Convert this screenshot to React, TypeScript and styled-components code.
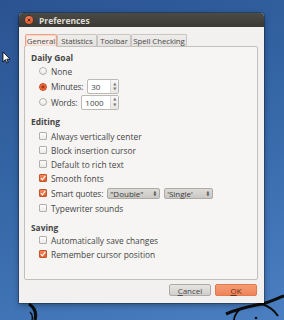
import React from 'react';
import styled, { createGlobalStyle } from 'styled-components';

const GlobalStyle = createGlobalStyle`
    html, body {
        margin: 0;
        padding: 0;
    }
    body {
        font-family: 'Open Sans', 'DejaVu Sans', sans-serif;
    }
`;

const Desktop = styled.div`
    position: relative;
    width: 284px;
    height: 320px;
    overflow: hidden;
    box-sizing: border-box;
    padding: 13px 0 0 19px;
    background: linear-gradient(160deg, #2b5391 0%, #3566a6 45%, #4a7fc2 100%);
`;

const Backdrop = styled.svg`
    position: absolute;
    left: 0;
    top: 0;
`;

const Window = styled.div`
    position: relative;
    width: 245px;
    height: 290px;
    display: flex;
    flex-direction: column;
    border-radius: 4px 4px 0 0;
    background: #f2f1f0;
    box-shadow: 0 0 0 1px rgba(0, 0, 0, 0.25), 0 2px 6px rgba(0, 0, 0, 0.35);
    overflow: hidden;
`;

const TitleBar = styled.div`
    height: 14px;
    flex: none;
    display: flex;
    align-items: center;
    gap: 6px;
    padding-left: 6px;
    background: linear-gradient(#4b4a45, #3a3935);
    color: #dfdbd2;
    font-weight: 700;
    font-size: 8.5px;
`;

const CloseButton = styled.div`
    width: 8px;
    height: 8px;
    border-radius: 50%;
    background: radial-gradient(circle at 40% 35%, #f7845c, #d9491b);
    box-shadow: 0 0 0 0.5px #2c2b28;
    display: flex;
    align-items: center;
    justify-content: center;
`;

const Body = styled.div`
    flex: 1;
    display: flex;
    flex-direction: column;
    padding: 7px 6px 0 5px;
`;

const Tabs = styled.div`
    display: flex;
    padding-left: 1px;
    height: 13px;
    position: relative;
    z-index: 1;
    margin-bottom: -1px;
`;

const Tab = styled.div<{ $active?: boolean; $w: number }>`
    width: ${p => p.$w}px;
    flex: none;
    box-sizing: border-box;
    display: flex;
    align-items: center;
    justify-content: center;
    white-space: nowrap;
    font-size: 7.9px;
    letter-spacing: -0.1px;
    color: #4c4c4c;
    border: 1px solid ${p => (p.$active ? '#e9a487' : '#c9c6c1')};
    border-bottom-color: ${p => (p.$active ? '#f6f5f4' : '#c3c0bb')};
    background: ${p => (p.$active ? '#f9ece6' : 'linear-gradient(#efedeb, #e4e2df)')};
    border-radius: 2px 2px 0 0;
    box-shadow: ${p => (p.$active ? 'inset 0 0 0 1px #fbd8c9' : 'none')};
`;

const Panel = styled.div`
    width: 234px;
    height: 234px;
    box-sizing: border-box;
    border: 1px solid #c3c0bb;
    border-radius: 0 2px 2px 2px;
    background: #f6f5f4;
    padding: 4px 0 0 6px;
    display: flex;
    flex-direction: column;
    color: #454545;
    font-size: 8.4px;
`;

const Header = styled.div<{ $mt?: number; $mb?: number }>`
    height: 12px;
    flex: none;
    display: flex;
    align-items: center;
    font-weight: 700;
    margin-top: ${p => p.$mt ?? 0}px;
    margin-bottom: ${p => p.$mb ?? 0}px;
`;

const Row = styled.div<{ $h?: number }>`
    height: ${p => p.$h ?? 14}px;
    flex: none;
    display: flex;
    align-items: center;
    padding-left: 8px;
    gap: 4px;
`;

const Label = styled.span<{ $mr?: number; $tight?: boolean }>`
    margin-right: ${p => p.$mr ?? 0}px;
    letter-spacing: ${p => (p.$tight ? '-0.2px' : 'normal')};
    white-space: nowrap;
`;

const RadioCircle = styled.div<{ $on?: boolean }>`
    width: 8px;
    height: 8px;
    box-sizing: border-box;
    border-radius: 50%;
    border: 1px solid ${p => (p.$on ? '#c84a1f' : '#b3b0ab')};
    background: ${p => (p.$on ? 'radial-gradient(circle, #a53613 0 1.3px, #ee6d3d 1.8px)' : 'linear-gradient(#fdfdfd, #ebeae8)')};
`;

const CheckBox = styled.div<{ $on?: boolean }>`
    width: 8px;
    height: 8px;
    box-sizing: border-box;
    border-radius: 1px;
    border: 1px solid ${p => (p.$on ? '#c4552a' : '#b3b0ab')};
    background: ${p => (p.$on ? 'linear-gradient(#f58a5f, #df5f2f)' : 'linear-gradient(#fdfdfd, #ebeae8)')};
    display: flex;
    align-items: center;
    justify-content: center;
`;

const Spin = styled.div<{ $w: number }>`
    width: ${p => p.$w}px;
    height: 15px;
    box-sizing: border-box;
    border: 1px solid #bdbab5;
    border-radius: 2px;
    background: #ffffff;
    display: flex;
    align-items: stretch;
    font-size: 8px;
`;

const SpinText = styled.div`
    flex: 1;
    display: flex;
    align-items: center;
    padding-left: 3px;
`;

const SpinArrows = styled.div`
    width: 7px;
    border-left: 1px solid #dcdad6;
    background: linear-gradient(#f8f8f7, #e8e7e5);
    display: flex;
    flex-direction: column;
    align-items: center;
    justify-content: space-evenly;
    color: #7a7875;
    font-size: 4px;
    line-height: 4px;
`;

const Combo = styled.div<{ $w: number }>`
    width: ${p => p.$w}px;
    height: 11px;
    box-sizing: border-box;
    border: 1px solid #aeaba6;
    border-radius: 2px;
    background: linear-gradient(#dddbd8, #cac8c4);
    display: flex;
    align-items: center;
    justify-content: space-between;
    padding: 0 3px 0 2px;
    font-size: 8px;
    color: #3c3c3c;
`;

const ComboArrows = styled.div`
    display: flex;
    flex-direction: column;
    font-size: 3.5px;
    line-height: 3.5px;
    color: #555;
`;

const Footer = styled.div`
    display: flex;
    justify-content: flex-end;
    gap: 4px;
    padding: 4px 1px 0 0;
`;

const Button = styled.div<{ $primary?: boolean }>`
    width: 42px;
    height: 12px;
    box-sizing: border-box;
    border-radius: 2px;
    display: flex;
    align-items: center;
    justify-content: center;
    font-size: 8px;
    color: ${p => (p.$primary ? '#6b2d16' : '#4a4a4a')};
    border: 1px solid ${p => (p.$primary ? '#e07a4e' : '#aeaba6')};
    background: ${p => (p.$primary ? 'linear-gradient(#f49c76, #ee8558)' : 'linear-gradient(#e6e4e1, #d1cfcb)')};
`;

const Mnemonic = styled.span`
    text-decoration: underline;
    text-decoration-thickness: 0.5px;
`;

const Check = () => (
    <svg width="6" height="6" viewBox="0 0 6 6">
        <path d="M0.8 3.2 L2.4 4.8 L5.3 1" stroke="#fff" strokeWidth="1.2" fill="none" />
    </svg>
);

const Arrows = () => (
    <>
        <span>▲</span>
        <span>▼</span>
    </>
);

const Option = ({ label, on }: { label: string; on?: boolean }) => (
    <Row>
        <CheckBox $on={on}>{on && <Check />}</CheckBox>
        <Label>{label}</Label>
    </Row>
);

const App = () => {
    return (
        <>
            <GlobalStyle />
            <Desktop>
                <Backdrop width="284" height="320" viewBox="0 0 284 320">
                    <path d="M3 52 L3 62 L5.3 59.6 L6.8 63 L8.2 62.4 L6.8 59.2 L10 59.2 Z" fill="#fff" stroke="#000" strokeWidth="0.8" />
                    <path d="M29 304 C34 307 37 312 35 320" stroke="#0d0d0d" strokeWidth="3.2" fill="none" />
                    <path d="M30 312 C32 314 33 317 32 320" stroke="#0d0d0d" strokeWidth="1.5" fill="none" />
                    <path d="M226 314 C240 308 252 306 262 304 C270 302 278 298 284 296" stroke="#0d0d0d" strokeWidth="3" fill="none" />
                    <path d="M262 304 C268 306 274 310 278 316" stroke="#0d0d0d" strokeWidth="2" fill="none" />
                    <path d="M240 309 C236 313 234 317 234 320" stroke="#0d0d0d" strokeWidth="1.8" fill="none" />
                    <circle cx="256" cy="318" r="1.3" fill="#0d0d0d" />
                </Backdrop>
                <Window>
                    <TitleBar>
                        <CloseButton>
                            <svg width="4" height="4" viewBox="0 0 4 4">
                                <path d="M0.5 0.5 L3.5 3.5 M3.5 0.5 L0.5 3.5" stroke="#3a1a0c" strokeWidth="0.9" />
                            </svg>
                        </CloseButton>
                        Preferences
                    </TitleBar>
                    <Body>
                        <Tabs>
                            <Tab $active $w={32}>General</Tab>
                            <Tab $w={40}>Statistics</Tab>
                            <Tab $w={34}>Toolbar</Tab>
                            <Tab $w={56}>Spell Checking</Tab>
                        </Tabs>
                        <Panel>
                            <Header>Daily Goal</Header>
                            <Row $h={16}>
                                <RadioCircle />
                                <Label>None</Label>
                            </Row>
                            <Row $h={15}>
                                <RadioCircle $on />
                                <Label $tight>Minutes:</Label>
                                <Spin $w={32}>
                                    <SpinText>30</SpinText>
                                    <SpinArrows>
                                        <Arrows />
                                    </SpinArrows>
                                </Spin>
                            </Row>
                            <Row $h={16}>
                                <RadioCircle />
                                <Label $tight>Words:</Label>
                                <Spin $w={38}>
                                    <SpinText>1000</SpinText>
                                    <SpinArrows>
                                        <Arrows />
                                    </SpinArrows>
                                </Spin>
                            </Row>
                            <Header $mt={5} $mb={2}>Editing</Header>
                            <Option label="Always vertically center" />
                            <Option label="Block insertion cursor" />
                            <Option label="Default to rich text" />
                            <Option label="Smooth fonts" on />
                            <Row $h={16}>
                                <CheckBox $on>
                                    <Check />
                                </CheckBox>
                                <Label $tight>Smart quotes:</Label>
                                <Combo $w={53}>
                                    <span>"Double"</span>
                                    <ComboArrows>
                                        <Arrows />
                                    </ComboArrows>
                                </Combo>
                                <Combo $w={49}>
                                    <span>'Single'</span>
                                    <ComboArrows>
                                        <Arrows />
                                    </ComboArrows>
                                </Combo>
                            </Row>
                            <Option label="Typewriter sounds" />
                            <Header $mt={6}>Saving</Header>
                            <Option label="Automatically save changes" />
                            <Option label="Remember cursor position" on />
                        </Panel>
                        <Footer>
                            <Button>
                                <Mnemonic>C</Mnemonic>ancel
                            </Button>
                            <Button $primary>
                                <Mnemonic>O</Mnemonic>K
                            </Button>
                        </Footer>
                    </Body>
                </Window>
            </Desktop>
        </>
    );
};

export default App;
